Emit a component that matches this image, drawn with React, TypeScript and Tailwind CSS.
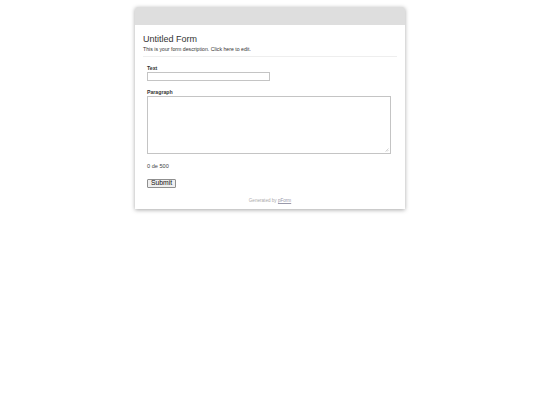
import React from "react";

export default function App() {
  return (
    <div className="min-h-[405px] w-full bg-white flex justify-center pt-[7px]" style={{ fontFamily: '"Liberation Sans", Arial, sans-serif' }}>
      <div className="w-[270px] h-[202px] bg-white rounded-t-[2px] shadow-[0_1px_4px_rgba(0,0,0,0.35)] flex flex-col">
        <div className="h-[18px] bg-[#dedede] rounded-t-[2px]" />
        <div className="px-[8px] pt-[9px]">
          <div className="text-[9px] leading-[10px] text-[#333]">Untitled Form</div>
          <div className="text-[5.2px] leading-[6px] text-[#333] mt-[2px]">This is your form description. Click here to edit.</div>
          <div className="h-px bg-[#eeeeee] mt-[4px]" />
          <div className="px-[4px] pt-[8px]">
            <div className="text-[5.2px] leading-[6px] font-bold text-[#333]">Text</div>
            <div className="mt-[1px] w-[123px] h-[9px] border border-[#c4c4c4] bg-white" />
            <div className="text-[5.2px] leading-[6px] font-bold text-[#333] mt-[8px]">Paragraph</div>
            <div className="relative mt-[1px] w-[244px] h-[58px] border border-[#c4c4c4] bg-white">
              <svg className="absolute right-[1px] bottom-[1px]" width="4" height="4" viewBox="0 0 4 4">
                <line x1="0.5" y1="3.5" x2="3.5" y2="0.5" stroke="#aaa" strokeWidth="0.5" />
                <line x1="2" y1="3.5" x2="3.5" y2="2" stroke="#aaa" strokeWidth="0.5" />
              </svg>
            </div>
            <div className="text-[5.6px] leading-[6px] text-[#444] mt-[9px]">0 de 500</div>
            <div className="mt-[10px] w-[29px] h-[9px] border border-[#8f8f8f] rounded-[1px] bg-[#efefef] flex items-center justify-center text-[6.8px] leading-none text-[#111]">
              Submit
            </div>
            <div className="mt-[10px] text-center text-[4.6px] leading-[5px] text-[#aaa]">
              Generated by <span className="underline text-[#99a]">pForm</span>
            </div>
          </div>
        </div>
      </div>
    </div>
  );
}
